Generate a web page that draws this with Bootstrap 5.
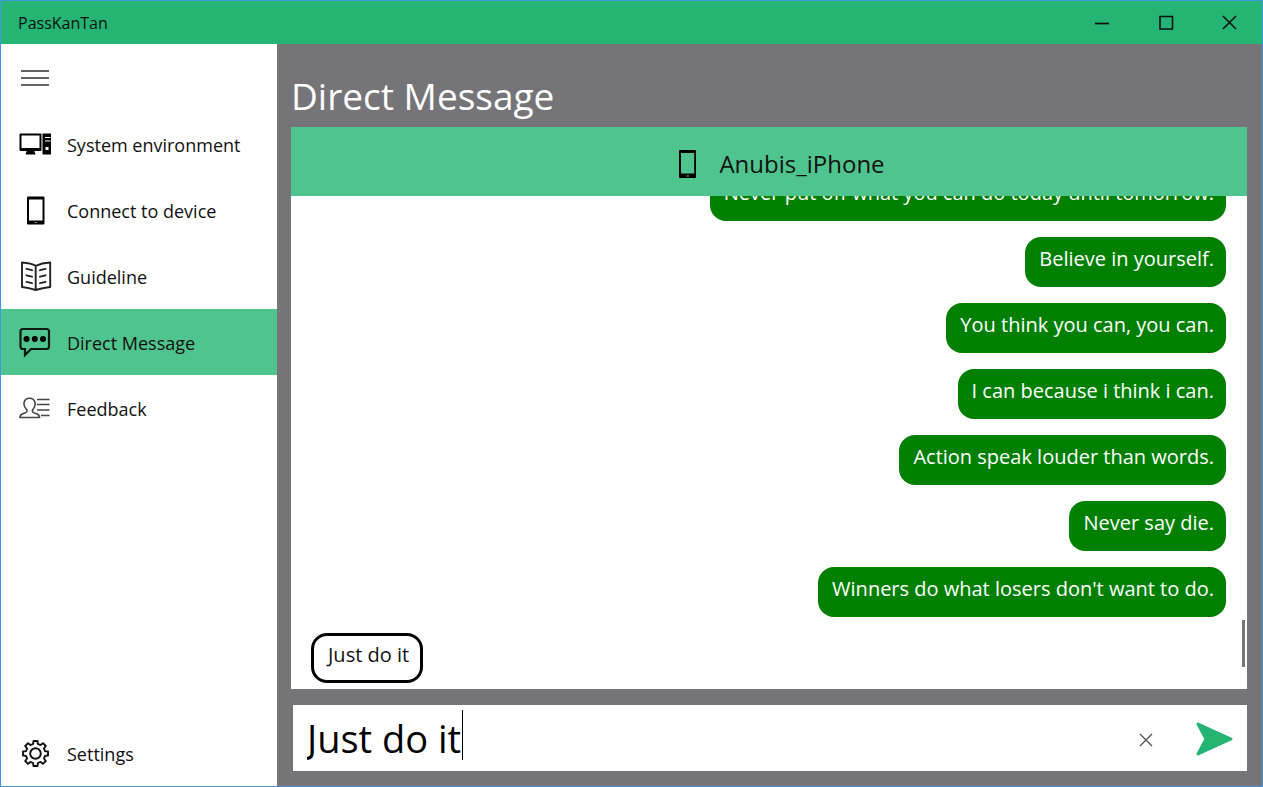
<!DOCTYPE html>
<html lang="en">
<head>
<meta charset="utf-8">
<meta name="viewport" content="width=device-width, initial-scale=1">
<title>PassKanTan</title>
<link href="https://cdn.jsdelivr.net/npm/bootstrap@5.3.0/dist/css/bootstrap.min.css" rel="stylesheet">
<style>
  :root { --brand: #24b574; --brand-soft: #4fc48f; --shell: #757479; --bubble: #008000; }
  body { font-family: "Open Sans", "Noto Sans", sans-serif; color: #111; }
  .app-window { border: 1px solid #3f98e0; background: var(--shell); }
  .title-bar { height: 43px; background: var(--brand); padding-left: 17px; font-size: 16px; line-height: 22px; }
  .title-bar button { width: 64px; height: 42px; }
  .bare-btn { border: 0; background: none; padding: 0; color: #111; display: flex; align-items: center; justify-content: center; }
  .side-pane { width: 276px; background: #fff; }
  .menu-toggle { width: 67px; height: 67px; }
  .side-link { height: 66px; padding-left: 16px; gap: 14px; font-size: 18px; line-height: 26px; color: #111; border-radius: 0; }
  .side-link:hover { color: #111; }
  .side-link.active { background: var(--brand-soft); }
  .side-link svg { width: 36px; height: 36px; }
  .side-link span { padding-top: 2px; }
  .main-pane { padding: 0 15px 15px 14px; }
  .page-title { height: 83px; padding-top: 22px; font-size: 37px; line-height: 60px; color: #fff; }
  .chat-head { height: 69px; background: var(--brand-soft); font-size: 24px; gap: 14px; padding: 4px 0 0 16px; }
  .chat-head svg { width: 36px; height: 36px; }
  .chat-log { padding: 0 21px 6px 20px; gap: 16px; font-size: 20px; }
  .bubble { height: 50px; line-height: 26px; border: 3px solid var(--bubble); border-radius: 16px; background: var(--bubble); color: #fff; padding: 6px 9px 0 11px; white-space: nowrap; }
  .bubble.received { border-color: #000; background: #fff; color: #111; padding-left: 14px; padding-right: 11px; }
  .thumb { right: 2px; bottom: 22px; width: 3px; height: 47px; background: #757479; }
  .composer { height: 66px; margin: 16px 0 0 2px; background: #fff; }
  .composer input { border: 0; padding: 0 0 0 14px; font-size: 38px; color: #000; background: none; outline: 0; min-width: 0; caret-color: transparent; }
  .caret { left: 169px; top: 5px; width: 1px; height: 50px; background: #000; }
  .clear-btn { width: 70px; height: 66px; padding-top: 3px; }
  .send-btn { width: 66px; height: 66px; padding-top: 2px; }
</style>
</head>
<body>
<div class="app-window vh-100 d-flex flex-column overflow-hidden">
  <header class="title-bar d-flex align-items-center justify-content-between flex-shrink-0">
    <span>PassKanTan</span>
    <div class="d-flex">
      <button type="button" class="bare-btn" aria-label="Minimize"><svg width="16" height="16" stroke="#111" stroke-width="1.7"><path d="M1 8.500h14"/></svg></button>
      <button type="button" class="bare-btn" aria-label="Maximize"><svg width="16" height="16" fill="none" stroke="#111" stroke-width="1.6"><path d="M2 1.500h12.500v12.500H2z"/></svg></button>
      <button type="button" class="bare-btn" aria-label="Close"><svg width="16" height="16" stroke="#111" stroke-width="1.6"><path d="M1 1l13 13M14 1L1 14"/></svg></button>
    </div>
  </header>

  <div class="d-flex flex-grow-1 overflow-hidden">
    <aside class="side-pane d-flex flex-column flex-shrink-0">
      <button type="button" class="bare-btn menu-toggle" aria-label="Menu"><svg width="28" height="18" stroke="#333" stroke-width="1.7"><path d="M0 2h28M0 9h28M0 16h28"/></svg></button>
      <nav class="nav flex-column flex-grow-1">
        <a class="nav-link side-link d-flex align-items-center py-0" href="#">
          <svg viewBox="0 0 36 36"><path d="M3.500 7.500h20q1 0 1 1v15.500q0 1-1 1h-20q-1 0-1-1V8.500q0-1 1-1zM4.500 9.500v12.500h18V9.500z" fill-rule="evenodd"/><path d="M10 24h7l1.500 4.500H8.500zM25.500 7.500H34v21h-8.500z"/><path d="M28 11.500h5.500M28 15h5.500" stroke="#fff" stroke-width="1.200"/><path d="M28.500 21h3v3h-3z" fill="#fff"/></svg>
          <span>System environment</span></a>
        <a class="nav-link side-link d-flex align-items-center py-0" href="#">
          <svg viewBox="0 0 36 36"><path fill-rule="evenodd" d="M11 4.500h15.500q1 0 1 1v26q0 1-1 1H11q-1 0-1-1V5.500q0-1 1-1zM12 7.500v21h13.500V7.500z"/><path d="M17.500 30.500h2.500" stroke="#888"/></svg>
          <span>Connect to device</span></a>
        <a class="nav-link side-link d-flex align-items-center py-0" href="#">
          <svg viewBox="0 0 36 36" fill="none" stroke="#222" stroke-width="1.900" stroke-linejoin="round" stroke-linecap="round"><path d="M5 4.500c5 .300 10 1 13.700 3.300C23 5.800 28 4.800 33.200 4.500v24.500c-5 .500-9.500 1.300-14.500 3C14 30.500 9.500 29.500 5 29zM18.700 8v24"/><path d="M9.500 10.800l5.500 1.400M9.500 17.300l5.500 1.400M9.500 23.800l5.500 1.400M28.500 10.800l-5.500 1.400M28.500 17.300l-5.500 1.400M28.500 23.800l-5.500 1.400"/></svg>
          <span>Guideline</span></a>
        <a class="nav-link side-link active d-flex align-items-center py-0" href="#" aria-current="page">
          <svg viewBox="0 0 36 36"><path d="M6 5h23.500q2.500 0 2.500 2.500v15q0 2.500-2.500 2.500H14l-6 6v-6H6q-2.500 0-2.500-2.500v-15Q3.500 5 6 5z" fill="none" stroke="#071b11" stroke-width="2.200"/><circle cx="9.500" cy="15" r="3"/><circle cx="17.800" cy="15" r="3"/><circle cx="26" cy="15" r="3"/></svg>
          <span>Direct Message</span></a>
        <a class="nav-link side-link d-flex align-items-center py-0" href="#">
          <svg viewBox="0 0 36 36" fill="none" stroke="#444" stroke-width="1.600"><path d="M10 20C5 15 6.500 8.300 12.500 8.300S20 15 15.500 20c-.600 2 .500 2.800 3.500 3.600 2.500.700 3.500 2 3.500 3.900H3c0-2 .800-3.200 3.300-3.900 3.400-.900 4.200-1.600 3.700-3.600z"/><path d="M20 9.500h12.500M20 14.500h12.500M20 20h12.500M24 25.500h8.500"/></svg>
          <span>Feedback</span></a>
        <a class="nav-link side-link d-flex align-items-center py-0 mt-auto" href="#">
          <svg viewBox="0 0 36 36" fill="none" stroke="#111" stroke-width="1.900" stroke-linejoin="round"><path id="gear"/><circle cx="18.500" cy="18.500" r="5.300"/></svg>
          <span>Settings</span></a>
      </nav>
    </aside>

    <main class="main-pane d-flex flex-column flex-grow-1 overflow-hidden">
      <h1 class="page-title fw-normal m-0 flex-shrink-0">Direct Message</h1>
      <section class="d-flex flex-column flex-grow-1 bg-white position-relative overflow-hidden">
        <div class="chat-head d-flex align-items-center justify-content-center flex-shrink-0">
          <svg viewBox="0 0 36 36"><path fill-rule="evenodd" d="M11 4h15q1 0 1 1v26q0 1-1 1H11q-1 0-1-1V5q0-1 1-1zM12 7v20.500h13.200V7z"/><path d="M17.500 30h2.500" stroke="#4fc48f"/></svg>
          <span>Anubis_iPhone</span>
        </div>
        <ul class="chat-log list-unstyled m-0 d-flex flex-column justify-content-end align-items-end flex-grow-1 overflow-hidden">
          <li class="bubble flex-shrink-0">Never put off what you can do today until tomorrow.</li>
          <li class="bubble flex-shrink-0">Believe in yourself.</li>
          <li class="bubble flex-shrink-0">You think you can, you can.</li>
          <li class="bubble flex-shrink-0">I can because i think i can.</li>
          <li class="bubble flex-shrink-0">Action speak louder than words.</li>
          <li class="bubble flex-shrink-0">Never say die.</li>
          <li class="bubble flex-shrink-0">Winners do what losers don't want to do.</li>
          <li class="bubble received flex-shrink-0 align-self-start">Just do it</li>
        </ul>
        <div class="thumb position-absolute"></div>
      </section>
      <form class="composer d-flex align-items-center position-relative flex-shrink-0">
        <input type="text" class="flex-grow-1 h-100" value="Just do it" aria-label="Message">
        <span class="caret position-absolute"></span>
        <button type="button" class="bare-btn clear-btn" aria-label="Clear"><svg width="14" height="14" stroke="#555" stroke-width="1.400"><path d="M1 1l12 12M13 1L1 13"/></svg></button>
        <button type="submit" class="bare-btn send-btn" aria-label="Send"><svg width="38" height="36" viewBox="0 0 38 36"><path d="M3 3l33 15L3 33l8-15z" fill="#24b574" stroke="#24b574" stroke-width="3" stroke-linejoin="round"/></svg></button>
      </form>
    </main>
  </div>
</div>
<script src="https://cdn.jsdelivr.net/npm/bootstrap@5.3.0/dist/js/bootstrap.bundle.min.js"></script>
<script>
  // Outline of the settings gear: eight teeth around the hub
  const pts = [];
  for (let i = 0; i < 8; i++) {
    for (const [r, offset] of [[9.8, -14], [12.7, -9], [12.7, 9], [9.8, 14]]) {
      const a = (i * 45 + offset) * Math.PI / 180;
      pts.push((18.5 + r * Math.sin(a)).toFixed(1) + " " + (18.5 - r * Math.cos(a)).toFixed(1));
    }
  }
  document.getElementById("gear").setAttribute("d", "M" + pts.join("L") + "z");
</script>
</body>
</html>
